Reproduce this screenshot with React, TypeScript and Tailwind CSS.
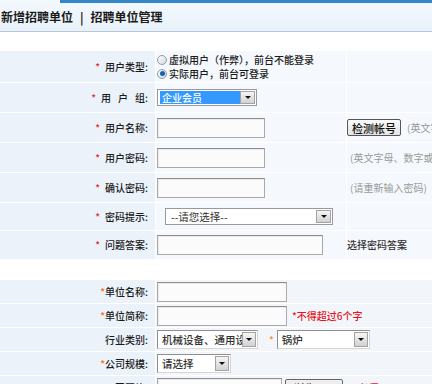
import type { ReactNode } from "react";

function Arrow({ small }: { small?: boolean }) {
  return (
    <span
      className={`flex shrink-0 items-center justify-center border border-[#a3a3a3] bg-gradient-to-b from-[#f6f6f6] to-[#d2d2d2] ${
        small ? "h-[13px] w-[15px]" : "h-[15px] w-[14px]"
      }`}
    >
      <span className="h-0 w-0 border-x-[3px] border-t-[3px] border-x-transparent border-t-[#111]" />
    </span>
  );
}

function Select({ className, children }: { className: string; children: ReactNode }) {
  return (
    <div
      className={`flex h-[19px] shrink-0 items-center overflow-hidden border border-[#8f8f8f] border-b-[#d6d6d6] border-r-[#d6d6d6] bg-white pr-px ${className}`}
    >
      <div className="min-w-0 flex-1 overflow-hidden whitespace-nowrap pl-[4px] text-[10.5px] text-[#333]">
        {children}
      </div>
      <Arrow />
    </div>
  );
}

function Input({ className }: { className: string }) {
  return (
    <input
      readOnly
      className={`h-[20px] shrink-0 border border-[#aaaaaa] border-t-[#8c8c8c] bg-[#fbfbfb] shadow-[inset_1px_1px_1px_rgba(0,0,0,0.07)] outline-none ${className}`}
    />
  );
}

function Radio({ checked }: { checked?: boolean }) {
  return (
    <span className="mr-[2px] flex h-[10px] w-[10px] shrink-0 items-center justify-center rounded-full border border-[#8d9aab] bg-gradient-to-br from-white to-[#d3d8df]">
      {checked && <span className="h-[5px] w-[5px] rounded-full bg-[#1d5fae]" />}
    </span>
  );
}

const Star = () => <span className="mr-[5px] text-[#e02b2b]">*</span>;
const OStar = () => <span className="text-[#ff6a00]">*</span>;

function Row({
  h,
  label,
  value,
  hint,
}: {
  h: string;
  label: ReactNode;
  value: ReactNode;
  hint?: ReactNode;
}) {
  return (
    <div className={`flex gap-px ${h}`}>
      <div className="flex w-[155px] shrink-0 items-center justify-end bg-[#ebf2fa] pr-[7px]">
        {label}
      </div>
      <div className="flex w-[190px] shrink-0 items-center bg-[#f5f8fc] pl-px">{value}</div>
      <div className="flex min-w-0 flex-1 items-center overflow-hidden whitespace-nowrap bg-[#f5f8fc]">
        {hint}
      </div>
    </div>
  );
}

function Row2({ label, children }: { label: ReactNode; children: ReactNode }) {
  return (
    <div className="flex h-[23px] gap-px">
      <div className="flex w-[155px] shrink-0 items-center justify-end bg-[#ebf2fa] pr-[7px]">
        {label}
      </div>
      <div className="flex min-w-0 flex-1 items-center overflow-hidden whitespace-nowrap bg-[#f2f6fb] pl-px">
        {children}
      </div>
    </div>
  );
}

export default function App() {
  return (
    <div className="h-[384px] w-[432px] overflow-hidden bg-white font-['Noto_Sans_CJK_SC','Liberation_Sans',sans-serif] text-[10px] font-medium leading-[14px] text-[#1a1a1a]">
      {/* header */}
      <div className="h-[32px] border-b border-[#b4c9de] bg-gradient-to-b from-[#f3f8fd] to-[#e9f2fa]">
        <div className="ml-[60px] h-[3px] bg-[#3585c9]" />
        <div className="flex items-center pl-px pt-[7px] text-[12px] font-bold text-[#1a1a1a]">
          新增招聘单位
          <span className="mx-[7px]">|</span>
          招聘单位管理
        </div>
      </div>

      {/* account section */}
      <div className="mt-[19px] flex flex-col gap-px">
        <Row
          h="h-[31px]"
          label={
            <>
              <Star />
              用户类型:
            </>
          }
          value={
            <div className="flex flex-col">
              <div className="flex items-center">
                <Radio />
                虚拟用户（作弊），前台不能登录
              </div>
              <div className="flex items-center">
                <Radio checked />
                实际用户，前台可登录
              </div>
            </div>
          }
        />
        <Row
          h="h-[29px]"
          label={
            <>
              <Star />
              <span className="tracking-[7px]">用户</span>组:
            </>
          }
          value={
            <div className="flex h-[17px] w-[100px] items-center border border-[#9a9a9a] bg-white pl-[2px] pr-px">
              <div className="h-[13px] flex-1 bg-[#3399ff] pl-[2px] leading-[13px] text-white">
                企业会员
              </div>
              <Arrow small />
            </div>
          }
        />
        <Row
          h="h-[29px]"
          label={
            <>
              <Star />
              用户名称:
            </>
          }
          value={<Input className="w-[108px]" />}
          hint={
            <>
              <span className="flex h-[17px] shrink-0 items-center rounded-[2px] border border-[#555] bg-gradient-to-b from-[#fafafa] to-[#e4e4e4] px-[4px] text-[11px] text-[#111]">
                检测帐号
              </span>
              <span className="ml-[6px] font-normal text-[#9a9a9a]">(英文字母</span>
            </>
          }
        />
        <Row
          h="h-[29px]"
          label={
            <>
              <Star />
              用户密码:
            </>
          }
          value={<Input className="w-[108px]" />}
          hint={<span className="pl-[3px] font-normal text-[#9a9a9a]">(英文字母、数字或</span>}
        />
        <Row
          h="h-[29px]"
          label={
            <>
              <Star />
              确认密码:
            </>
          }
          value={<Input className="w-[108px]" />}
          hint={<span className="pl-[3px] font-normal text-[#9a9a9a]">(请重新输入密码)</span>}
        />
        <Row
          h="h-[27px]"
          label={
            <>
              <Star />
              密码提示:
            </>
          }
          value={
            <div className="ml-[8px] flex h-[17px] w-[168px] items-center border border-[#9a9a9a] bg-white pl-[5px] pr-px">
              <span className="flex-1 text-[10.5px] font-normal text-[#333]">--请您选择--</span>
              <Arrow small />
            </div>
          }
        />
        <Row
          h="h-[28px]"
          label={
            <>
              <Star />
              问题答案:
            </>
          }
          value={<Input className="w-[166px]" />}
          hint={<span className="text-[#333]">选择密码答案</span>}
        />
      </div>

      {/* company section */}
      <div className="mt-[21px] flex flex-col gap-px">
        <Row2
          label={
            <>
              <OStar />
              单位名称:
            </>
          }
        >
          <Input className="h-[19px] w-[130px]" />
        </Row2>
        <Row2
          label={
            <>
              <OStar />
              单位简称:
            </>
          }
        >
          <Input className="h-[19px] w-[130px]" />
          <span className="ml-[5px] text-[#e8141e]">*不得超过6个字</span>
        </Row2>
        <Row2 label="行业类别:">
          <Select className="w-[101px]">机械设备、通用设</Select>
          <span className="ml-[11px] mr-[3px] text-[#ff8a2a]">*</span>
          <Select className="w-[93px]">锅炉</Select>
        </Row2>
        <Row2
          label={
            <>
              <OStar />
              公司规模:
            </>
          }
        >
          <Select className="w-[74px]">请选择</Select>
        </Row2>
        <Row2
          label={
            <>
              <OStar />
              公司图片:
            </>
          }
        >
          <Input className="h-[19px] w-[125px]" />
          <span className="ml-[3px] flex h-[18px] w-[58px] shrink-0 items-center rounded-[2px] border border-[#666] bg-[#eee] pl-[8px]">
            浏览...
          </span>
          <span className="ml-[7px] text-[#e8141e]">*(必须</span>
        </Row2>
      </div>
    </div>
  );
}
